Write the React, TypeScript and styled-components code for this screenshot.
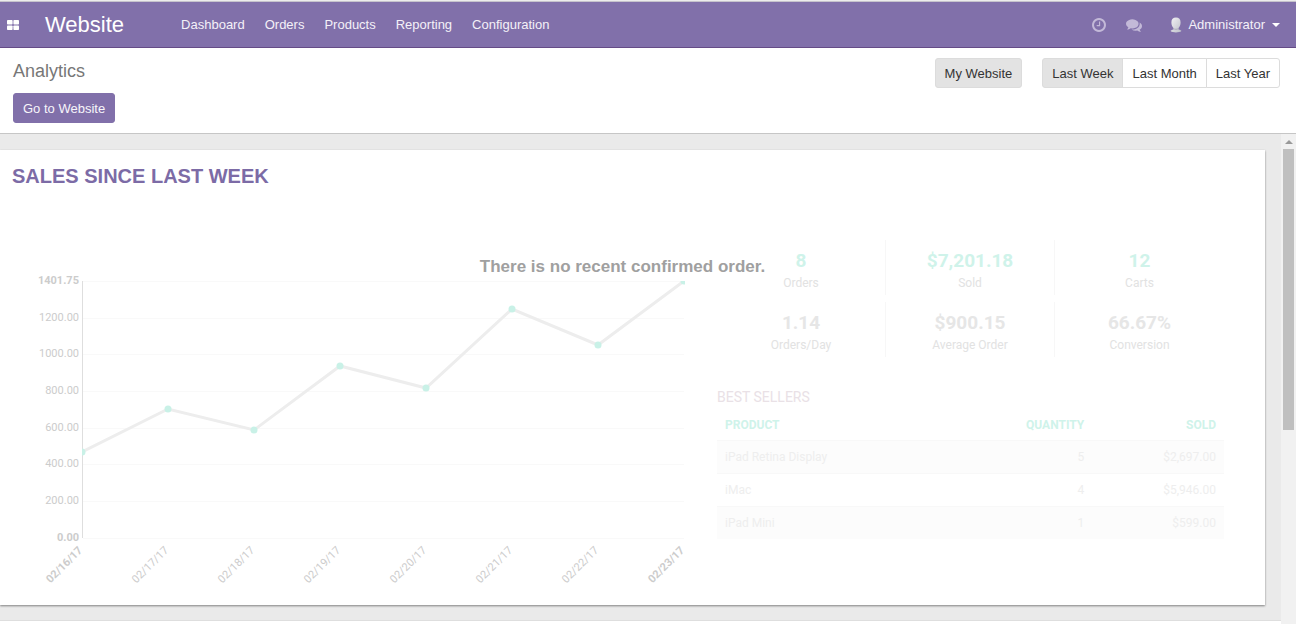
import React from 'react';
import styled, { createGlobalStyle, css } from 'styled-components';

const GlobalStyle = createGlobalStyle`
  *, *::before, *::after { box-sizing: border-box; }
  body {
    margin: 0;
    background: #fff;
    color: #333;
    font: 13px/20px "Liberation Sans", Arial, sans-serif;
  }
  button, a, table { font: inherit; }
`;

const Page = styled.div`
  display: flex;
  flex-direction: column;
  height: 100vh;
  overflow: hidden;
`;

const Navbar = styled.header`
  display: flex;
  align-items: center;
  flex: 0 0 48px;
  padding: 2px 16px 0 7px;
  color: #fff;
  background: #8170aa;
  border-top: 1px solid #ececec;
  border-bottom: 1px solid #654b86;
  box-shadow: inset 0 1px #c6c3cc;
`;

const IconButton = styled.button`
  display: flex;
  padding: 0;
  border: 0;
  background: none;
  color: inherit;
  cursor: pointer;
`;

const Brand = styled.a`
  margin-left: 26px;
  font-size: 22px;
  line-height: 44px;
  color: inherit;
  text-decoration: none;
`;

const Menu = styled.nav`
  display: flex;
  gap: 20px;
  margin-left: 57px;
`;

const MenuLink = styled.a`
  color: #f4f1f8;
  line-height: 44px;
  text-decoration: none;
`;

const SystemTray = styled.div`
  display: flex;
  align-items: center;
  gap: 20px;
  margin-left: auto;
  color: #c3b9d8;
`;

const UserButton = styled(IconButton)`
  align-items: center;
  gap: 6px;
  margin-left: 8px;
  color: #f4f1f8;
`;

const Caret = styled.span`
  margin-left: 1px;
  border: 4px solid transparent;
  border-top-color: #fff;
  border-bottom: 0;
`;

const ControlPanel = styled.section`
  display: flex;
  justify-content: space-between;
  align-items: flex-start;
  flex: none;
  padding: 10px 16px 10px 13px;
  border-bottom: 1px solid #c6c6c6;
`;

const Title = styled.h1`
  margin: 0 0 9px;
  font-size: 18px;
  font-weight: 400;
  line-height: 26px;
  color: #777;
`;

const Button = styled.button<{ $primary?: boolean; $active?: boolean }>`
  height: 30px;
  padding: 2px 9px 0;
  border: 1px solid #dcdcdc;
  border-radius: 3px;
  background: #fff;
  color: #333;
  cursor: pointer;
  ${p => p.$active && css`background: #e3e3e3;`}
  ${p => p.$primary && css`
    background: #8170aa;
    border-color: #8170aa;
    color: #f7f5fa;
  `}
`;

const Filters = styled.div`
  display: flex;
  gap: 20px;
`;

const ButtonGroup = styled.div`
  display: flex;
  & > button { border-radius: 0; }
  & > button:first-child { border-radius: 3px 0 0 3px; }
  & > button:last-child { border-radius: 0 3px 3px 0; }
  & > button + button { margin-left: -1px; }
`;

const Workspace = styled.div`
  display: flex;
  flex: 1;
  min-height: 0;
`;

const Content = styled.main`
  flex: 1;
  min-width: 0;
  overflow: hidden;
  padding-top: 16px;
  background: #eaeaea;
`;

const Card = styled.section`
  position: relative;
  min-height: 455px;
  margin: 0 16px 15px 0;
  background: #fff;
  box-shadow: 0 1px 2px rgba(0, 0, 0, 0.45);
`;

const CardTitle = styled.h2`
  margin: 0;
  padding: 12px 12px 0;
  font-size: 20px;
  line-height: 28px;
  font-weight: 700;
  text-transform: uppercase;
  color: #7c6ba6;
`;

const EmptyMessage = styled.p`
  position: absolute;
  top: 105px;
  left: 0;
  right: 20px;
  margin: 0;
  font-size: 17px;
  line-height: 24px;
  font-weight: 700;
  text-align: center;
  color: #a0a0a0;
`;

const Sample = styled.div`
  display: grid;
  grid-template-columns: minmax(0, 705fr) minmax(0, 507fr);
  padding: 50px 41px 0 12px;
  font-family: Roboto, sans-serif;
`;

const ChartSvg = styled.svg`
  display: block;
  width: 100%;
  font-size: 11px;
`;

const Stats = styled.dl`
  display: grid;
  grid-template-columns: repeat(3, 1fr);
  row-gap: 7px;
  margin: 0 0 30px;
`;

const Stat = styled.div`
  display: flex;
  flex-direction: column-reverse;
  justify-content: center;
  height: 55px;
  padding-top: 4px;
  text-align: center;
  border-right: 1px solid #f7f7f7;
  &:nth-child(3n) { border-right: 0; }
`;

const StatLabel = styled.dt`
  font-size: 12px;
  line-height: 18px;
  color: #e2e2e2;
`;

const StatValue = styled.dd<{ $accent?: boolean }>`
  margin: 0;
  font-size: 19px;
  line-height: 26px;
  font-weight: 700;
  color: ${p => (p.$accent ? '#cff3ea' : '#e6e6e6')};
`;

const SubTitle = styled.h3`
  margin: 0;
  font-size: 14px;
  line-height: 20px;
  font-weight: 400;
  color: #e9e1e6;
`;

const Table = styled.table`
  width: 100%;
  border-collapse: collapse;
  font-size: 12px;
  line-height: 16px;
  color: #eee;
`;

const HeadCell = styled.th<{ $end?: boolean }>`
  padding: 10px 8px 7px;
  font-weight: 700;
  text-transform: uppercase;
  text-align: ${p => (p.$end ? 'right' : 'left')};
  color: #cff3ea;
`;

const Row = styled.tr`
  border-top: 1px solid #f8f8f8;
  &:nth-child(odd) { background: #fcfcfc; }
`;

const Cell = styled.td<{ $end?: boolean }>`
  padding: 8px;
  text-align: ${p => (p.$end ? 'right' : 'left')};
`;

const NextPanel = styled.section`
  height: 300px;
  background: #fff;
  border-top: 1px solid #dedede;
`;

const Scrollbar = styled.div`
  display: flex;
  flex-direction: column;
  align-items: center;
  flex: 0 0 15px;
  background: #f1f1f1;
`;

const ScrollArrow = styled.span`
  margin: 6px 0 5px;
  border: 4px solid transparent;
  border-bottom-color: #999;
  border-top: 0;
`;

const ScrollThumb = styled.span`
  width: 11px;
  flex: 0 0 281px;
  background: #bfbfbf;
`;

const AppsIcon = () => (
  <svg width="12" height="10" viewBox="0 0 12 10" fill="#fff" aria-hidden="true">
    <rect width="5.6" height="4.6" rx="0.8" />
    <rect x="6.4" width="5.6" height="4.6" rx="0.8" />
    <rect y="5.4" width="5.6" height="4.6" rx="0.8" />
    <rect x="6.4" y="5.4" width="5.6" height="4.6" rx="0.8" />
  </svg>
);

const ClockIcon = () => (
  <svg width="14" height="18" viewBox="0 0 1536 1792" fill="currentColor" aria-hidden="true">
    <path d="M896 544v448q0 14-9 23t-23 9h-320q-14 0-23-9t-9-23v-64q0-14 9-23t23-9h224v-352q0-14 9-23t23-9h64q14 0 23 9t9 23zm416 352q0-148-73-273t-198-198-273-73-273 73-198 198-73 273 73 273 198 198 273 73 273-73 198-198 73-273zm224 0q0 209-103 385.500t-279.500 279.500-385.500 103-385.500-103-279.500-279.500-103-385.500 103-385.500 279.500-279.500 385.500-103 385.500 103 279.500 279.500 103 385.500z" />
  </svg>
);

const CommentsIcon = () => (
  <svg width="16" height="18" viewBox="0 0 1792 1792" fill="currentColor" aria-hidden="true">
    <path d="M1408 768q0 139-94 257t-256.500 186.500-353.500 68.500q-86 0-176-16-124 88-278 128-36 9-86 16h-3q-11 0-20.500-8t-11.500-21q-1-3-1-6.500t.5-6.500 2-6l2.500-5 3.500-5.500 4-5 4.500-5 4-4.500q5-6 23-25t26-29.500 22.500-29 25-38.500 20.500-44q-124-72-195-177t-71-224q0-139 94-257t256.500-186.500 353.500-68.500 353.500 68.500 256.500 186.500 94 257zm384 256q0 120-71 224.500t-195 176.500q10 24 20.500 44t25 38.500 22.500 29 26 29.500 23 25q1 1 4 4.500t4.500 5 4 5 3.500 5.500l2.500 5 2 6 .5 6.500-1 6.500q-3 14-13 22t-22 7q-50-7-86-16-154-40-278-128-90 16-176 16-271 0-472-132 58 4 88 4 161 0 309-45t264-129q125-92 192-212t67-254q0-77-23-152 129 71 204 178t75 230z" />
  </svg>
);

const Avatar = () => (
  <svg width="12" height="16" viewBox="0 0 12 16" aria-hidden="true">
    <defs>
      <linearGradient id="bust" x1="0" y1="0" x2="1" y2="1">
        <stop offset="0" stopColor="#f3f3f5" />
        <stop offset="1" stopColor="#bdbfc8" />
      </linearGradient>
    </defs>
    <path d="M6 .6C9 .6 10.600 2.500 10.600 5.500c0 2.300-.9 4.400-2.100 5.400v1.500c1.600.3 2.700.8 2.900 1.700C10.300 15.200 8.200 15.500 6 15.500S1.700 15.200.6 14.100c.2-.9 1.300-1.400 2.900-1.700v-1.500C2.300 9.900 1.400 7.800 1.400 5.500 1.400 2.500 3 .6 6 .6z" fill="url(#bust)" />
    <path d="M3.500 11.200q2.500 1.400 5-.2v1.300q-2.500.9-5 0z" fill="#a9a9b8" />
  </svg>
);

const yTicks = [
  { label: '1401.75', y: 281, bold: true },
  { label: '1200.00', y: 318 },
  { label: '1000.00', y: 354 },
  { label: '800.00', y: 391 },
  { label: '600.00', y: 428 },
  { label: '400.00', y: 464 },
  { label: '200.00', y: 501 },
  { label: '0.00', y: 538, bold: true },
];

const points = [
  { day: '02/16/17', x: 82, y: 452, bold: true },
  { day: '02/17/17', x: 168, y: 409 },
  { day: '02/18/17', x: 254, y: 430 },
  { day: '02/19/17', x: 340, y: 366 },
  { day: '02/20/17', x: 426, y: 388 },
  { day: '02/21/17', x: 512, y: 309 },
  { day: '02/22/17', x: 598, y: 345 },
  { day: '02/23/17', x: 684, y: 281, bold: true },
];

const SalesChart = () => (
  <ChartSvg viewBox="12 240 705 350" role="img" aria-label="Sales per day">
    <clipPath id="plot">
      <rect x="82" y="281" width="603" height="258" />
    </clipPath>
    {yTicks.map(t => (
      <g key={t.label}>
        <path d={`M83 ${t.y + 0.5}H684`} stroke="#f9f9f9" />
        <text x="79" y={t.y + 3} textAnchor="end" fill="#ccc" fontWeight={t.bold ? 700 : 400}>{t.label}</text>
      </g>
    ))}
    <path d="M82.500 281V538" stroke="#dedede" />
    <g clipPath="url(#plot)">
      <polyline points={points.map(p => `${p.x},${p.y}`).join(' ')} fill="none" stroke="#ededed" strokeWidth="3" />
      {points.map(p => <circle key={p.day} cx={p.x} cy={p.y} r="3.500" fill="#c9f1e7" />)}
    </g>
    {points.map(p => (
      <text key={p.day} transform={`translate(${p.x + 1} 551) rotate(-45)`} textAnchor="end" fill="#ccc" fontWeight={p.bold ? 700 : 400}>
        {p.day}
      </text>
    ))}
  </ChartSvg>
);

const stats = [
  { label: 'Orders', value: '8', accent: true },
  { label: 'Sold', value: '$7,201.18', accent: true },
  { label: 'Carts', value: '12', accent: true },
  { label: 'Orders/Day', value: '1.14' },
  { label: 'Average Order', value: '$900.15' },
  { label: 'Conversion', value: '66.67%' },
];

const sellers = [
  ['iPad Retina Display', '5', '$2,697.00'],
  ['iMac', '4', '$5,946.00'],
  ['iPad Mini', '1', '$599.00'],
];

export default function App() {
  return (
    <Page>
      <GlobalStyle />
      <Navbar>
        <IconButton aria-label="Applications"><AppsIcon /></IconButton>
        <Brand href="#">Website</Brand>
        <Menu>
          {['Dashboard', 'Orders', 'Products', 'Reporting', 'Configuration'].map(item => (
            <MenuLink key={item} href="#">{item}</MenuLink>
          ))}
        </Menu>
        <SystemTray>
          <IconButton aria-label="Activities"><ClockIcon /></IconButton>
          <IconButton aria-label="Conversations"><CommentsIcon /></IconButton>
          <UserButton><Avatar />Administrator<Caret /></UserButton>
        </SystemTray>
      </Navbar>
      <ControlPanel>
        <div>
          <Title>Analytics</Title>
          <Button $primary>Go to Website</Button>
        </div>
        <Filters>
          <Button $active>My Website</Button>
          <ButtonGroup>
            <Button $active>Last Week</Button>
            <Button>Last Month</Button>
            <Button>Last Year</Button>
          </ButtonGroup>
        </Filters>
      </ControlPanel>
      <Workspace>
        <Content>
          <Card>
            <CardTitle>Sales since last week</CardTitle>
            <Sample>
              <SalesChart />
              <div>
                <Stats>
                  {stats.map(s => (
                    <Stat key={s.label}>
                      <StatLabel>{s.label}</StatLabel>
                      <StatValue $accent={s.accent}>{s.value}</StatValue>
                    </Stat>
                  ))}
                </Stats>
                <SubTitle>BEST SELLERS</SubTitle>
                <Table>
                  <colgroup>
                    <col />
                    <col width="20%" />
                    <col width="26%" />
                  </colgroup>
                  <thead>
                    <tr>
                      <HeadCell>Product</HeadCell>
                      <HeadCell $end>Quantity</HeadCell>
                      <HeadCell $end>Sold</HeadCell>
                    </tr>
                  </thead>
                  <tbody>
                    {sellers.map(([name, quantity, sold]) => (
                      <Row key={name}>
                        <Cell>{name}</Cell>
                        <Cell $end>{quantity}</Cell>
                        <Cell $end>{sold}</Cell>
                      </Row>
                    ))}
                  </tbody>
                </Table>
              </div>
            </Sample>
            <EmptyMessage>There is no recent confirmed order.</EmptyMessage>
          </Card>
          <NextPanel />
        </Content>
        <Scrollbar aria-hidden="true">
          <ScrollArrow />
          <ScrollThumb />
        </Scrollbar>
      </Workspace>
    </Page>
  );
}
